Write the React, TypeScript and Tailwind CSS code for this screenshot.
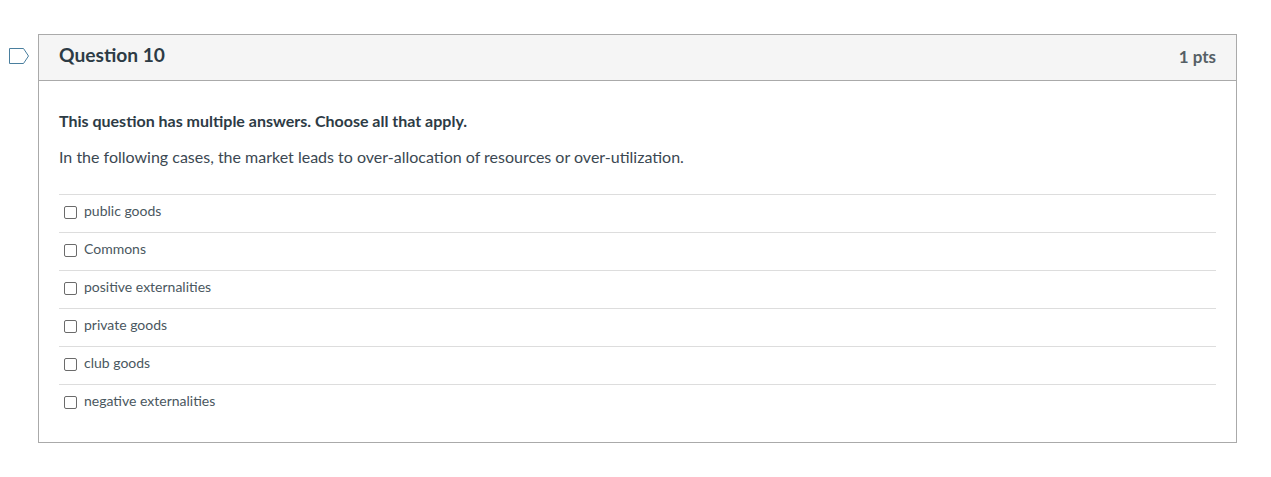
const answers = [
  'public goods',
  'Commons',
  'positive externalities',
  'private goods',
  'club goods',
  'negative externalities',
];

export default function App() {
  return (
    <div className="min-h-[477px] bg-white pt-[34px] pl-[9px] font-['Lato','Liberation_Sans',sans-serif] text-[#2d3b45]">
      <div className="flex w-[1228px] items-start">
        <div className="mt-[14px] w-[20px] shrink-0">
          <svg width="20" height="16" viewBox="0 0 20 16" fill="none">
            <path d="M0.5 0.5H14.5L19.5 8L14.5 15.5H0.5Z" stroke="#4a7f9e" strokeWidth="1" />
          </svg>
        </div>
        <div className="ml-[9px] w-[1199px] border border-[#aaaaaa]">
          <div className="flex h-[46px] items-center justify-between border-b border-[#aaaaaa] bg-[#f5f5f5] px-5">
            <h2 className="mb-[6px] text-[19.2px] leading-[40px] font-bold">Question 10</h2>
            <div className="mb-[2px] text-[17px] font-bold text-[#555f66]">1 pts</div>
          </div>
          <div className="px-5 pt-[29px] pb-[22px]">
            <p className="text-[16px] leading-[22px] font-bold">This question has multiple answers. Choose all that apply.</p>
            <p className="mt-[14px] text-[16px] leading-[22px] text-[#3b4852]">In the following cases, the market leads to over-allocation of resources or over-utilization.</p>
            <div className="mt-[26px] -mb-[2px]">
              {answers.map((a) => (
                <label key={a} className="flex h-[38px] items-center border-t border-[#dddddd] pl-[5px]">
                  <span className="mb-[2px] h-[13px] w-[13px] shrink-0 rounded-[2px] border border-[#6b6b6b] bg-white" />
                  <span className="mb-[5px] ml-[7px] text-[14px] leading-[20px] text-[#4a5760]">{a}</span>
                </label>
              ))}
            </div>
          </div>
        </div>
      </div>
    </div>
  );
}
